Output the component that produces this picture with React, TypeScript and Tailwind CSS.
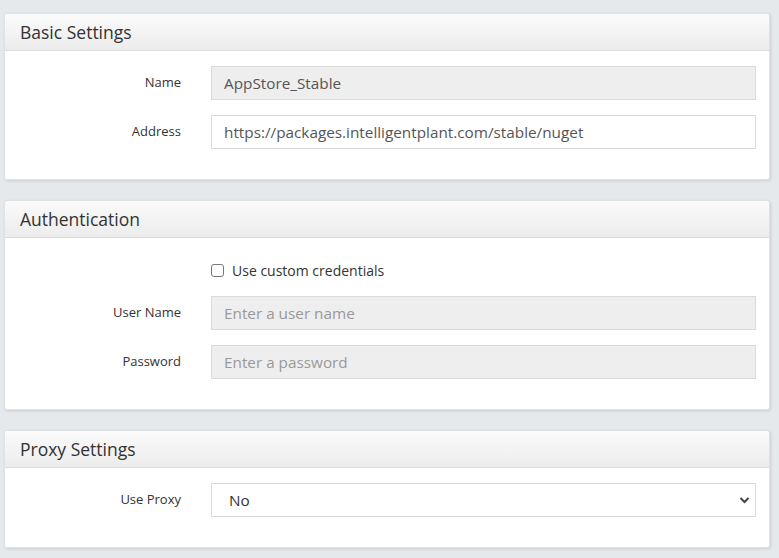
import React from "react";

const font = { fontFamily: '"Open Sans", "Noto Sans", sans-serif' };

function Card({ title, children }: { title: string; children: React.ReactNode }) {
  return (
    <div className="bg-white rounded-[3px] shadow-[1px_1px_3px_rgba(0,0,0,0.12)] border border-[#dfe2e5]">
      <div className="h-[37px] flex items-center px-[15px] border-b border-[#dcdcdc] bg-gradient-to-b from-[#fbfbfb] to-[#ececec] rounded-t-[3px]">
        <span className="text-[17.5px] text-[#333]">{title}</span>
      </div>
      <div className="pt-[15px] pb-[30px] pr-[13px] flex flex-col gap-[15px]">{children}</div>
    </div>
  );
}

function Row({ label, children }: { label?: string; children: React.ReactNode }) {
  return (
    <div className="flex items-center">
      <div className="w-[176px] shrink-0 text-right text-[13px] text-[#333]">{label}</div>
      <div className="ml-[30px] flex-1">{children}</div>
    </div>
  );
}

function Input({ value, placeholder, disabled }: { value?: string; placeholder?: string; disabled?: boolean }) {
  return (
    <div
      className={`h-[34px] flex items-center px-[12px] border border-[#dadada] text-[15.3px] ${
        disabled ? "bg-[#eeeeee]" : "bg-white"
      } ${value ? "text-[#555]" : "text-[#999]"}`}
    >
      {value ?? placeholder}
    </div>
  );
}

export default function App() {
  return (
    <div className="w-[779px] h-[558px] bg-[#e6e9ec] pt-[13px] pl-[4px] pr-[9px] flex flex-col gap-[20px]" style={font}>
      <Card title="Basic Settings">
        <Row label="Name">
          <Input value="AppStore_Stable" disabled />
        </Row>
        <Row label="Address">
          <Input value="https://packages.intelligentplant.com/stable/nuget" />
        </Row>
      </Card>
      <Card title="Authentication">
        <Row>
          <div className="flex items-center h-[34px] -mb-[6px]">
            <span className="w-[13px] h-[13px] border border-[#767676] rounded-[3px] bg-white inline-block" />
            <span className="ml-[8px] text-[14px] text-[#333]">Use custom credentials</span>
          </div>
        </Row>
        <Row label="User Name">
          <Input placeholder="Enter a user name" disabled />
        </Row>
        <Row label="Password">
          <Input placeholder="Enter a password" disabled />
        </Row>
      </Card>
      <Card title="Proxy Settings">
        <Row label="Use Proxy">
          <div className="h-[34px] flex items-center justify-between pl-[17px] pr-[4px] border border-[#dadada] bg-white text-[15.3px] text-[#333]">
            <span>No</span>
            <svg width="11" height="8" viewBox="0 0 11 8" className="mr-[1px]">
              <path d="M1.5 2 L5.5 6 L9.5 2" stroke="#444" strokeWidth="2" fill="none" />
            </svg>
          </div>
        </Row>
      </Card>
    </div>
  );
}
